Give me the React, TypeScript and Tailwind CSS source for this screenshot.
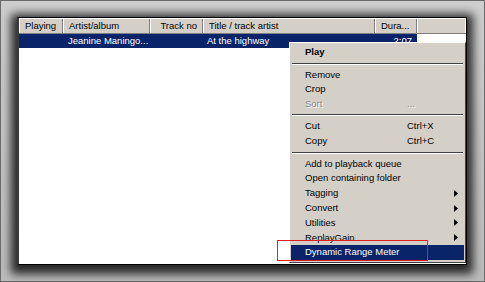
import React from 'react';

type MenuEntry =
  | { kind: 'sep' }
  | { kind: 'item'; label: string; bold?: boolean; disabled?: boolean; shortcut?: string; sub?: boolean; active?: boolean };

const menu: MenuEntry[] = [
  { kind: 'item', label: 'Play', bold: true },
  { kind: 'sep' },
  { kind: 'item', label: 'Remove' },
  { kind: 'item', label: 'Crop' },
  { kind: 'item', label: 'Sort', disabled: true, shortcut: '...' },
  { kind: 'sep' },
  { kind: 'item', label: 'Cut', shortcut: 'Ctrl+X' },
  { kind: 'item', label: 'Copy', shortcut: 'Ctrl+C' },
  { kind: 'sep' },
  { kind: 'item', label: 'Add to playback queue' },
  { kind: 'item', label: 'Open containing folder' },
  { kind: 'item', label: 'Tagging', sub: true },
  { kind: 'item', label: 'Convert', sub: true },
  { kind: 'item', label: 'Utilities', sub: true },
  { kind: 'item', label: 'ReplayGain', sub: true },
  { kind: 'item', label: 'Dynamic Range Meter', active: true },
];

function Arrow({ white }: { white?: boolean }) {
  return (
    <svg width="4" height="7" viewBox="0 0 4 7" className="shrink-0">
      <path d="M0 0 L4 3.5 L0 7 Z" fill={white ? '#ffffff' : '#000000'} />
    </svg>
  );
}

function HeaderCell({ label, w, right }: { label: string; w: string; right?: boolean }) {
  return (
    <div
      className={`${w} h-full flex items-center px-[5px] border-r border-r-[#808080] border-l border-l-white whitespace-nowrap overflow-hidden ${right ? 'justify-end' : ''}`}
    >
      {label}
    </div>
  );
}

export default function App() {
  return (
    <div
      className="w-[485px] h-[282px] border border-[#6a6a6a] bg-gradient-to-b from-[#cfcfcf] to-[#bcbcbc] pl-[16px] pt-[16px]"
      style={{ fontFamily: '"Liberation Sans", Arial, sans-serif' }}
    >
      <div className="relative w-[450px] h-[248px] bg-white border border-black border-l-[2px] border-l-[#3a3a3a] shadow-[0_3px_9px_6px_rgba(0,0,0,0.8)] text-[9.5px] text-black">
        {/* Column header */}
        <div className="flex h-[16px] bg-[#d4d0c8] border-t border-t-white border-b border-b-[#808080]">
          <HeaderCell label="Playing" w="w-[44px]" />
          <HeaderCell label="Artist/album" w="w-[87px]" />
          <HeaderCell label="Track no" w="w-[53px]" right />
          <HeaderCell label="Title / track artist" w="w-[172px]" />
          <HeaderCell label="Dura..." w="w-[42px]" />
          <div className="flex-1 border-l border-l-white border-r border-r-white" />
        </div>

        {/* Selected row */}
        <div className="flex h-[14px] text-white">
          <div className="flex w-[398px] bg-[#0a246a] items-center">
            <div className="w-[44px]" />
            <div className="w-[87px] px-[5px] whitespace-nowrap">Jeanine Maningo...</div>
            <div className="w-[53px]" />
            <div className="w-[172px] px-[4px] whitespace-nowrap">At the highway</div>
            <div className="w-[42px] px-[5px] text-right">2:07</div>
          </div>
        </div>

        {/* Context menu */}
        <div className="absolute left-[270px] top-[24px] w-[177px] h-[221px] bg-[#d4d0c8] border border-t-white border-l-white border-r-[#404040] border-b-[#404040] px-[1px] pt-[2px] pb-[1px]">
          <div className="flex flex-col">
            {menu.map((m, i) =>
              m.kind === 'sep' ? (
                <div key={i} className="h-[7.5px] flex flex-col justify-center px-[1px]">
                  <div className="h-px bg-[#404040]" />
                  <div className="h-px bg-white" />
                </div>
              ) : (
                <div
                  key={i}
                  className={`h-[14.8px] flex items-center pl-[14px] pr-[6px] whitespace-nowrap ${
                    m.active ? 'bg-[#0a246a] text-white' : ''
                  } ${m.bold ? 'font-bold' : ''} ${m.disabled ? 'text-[#8a8a8a] [text-shadow:1px_1px_0_#ffffff]' : ''}`}
                >
                  <span className="flex-1">{m.label}</span>
                  {m.shortcut && <span className="w-[51px]">{m.shortcut}</span>}
                  {m.sub && <Arrow white={m.active} />}
                </div>
              )
            )}
          </div>
        </div>

        {/* Highlight box */}
        <div className="absolute z-10 left-[258px] top-[222px] w-[151px] h-[21px] border border-[#e02020]" />
      </div>
    </div>
  );
}
